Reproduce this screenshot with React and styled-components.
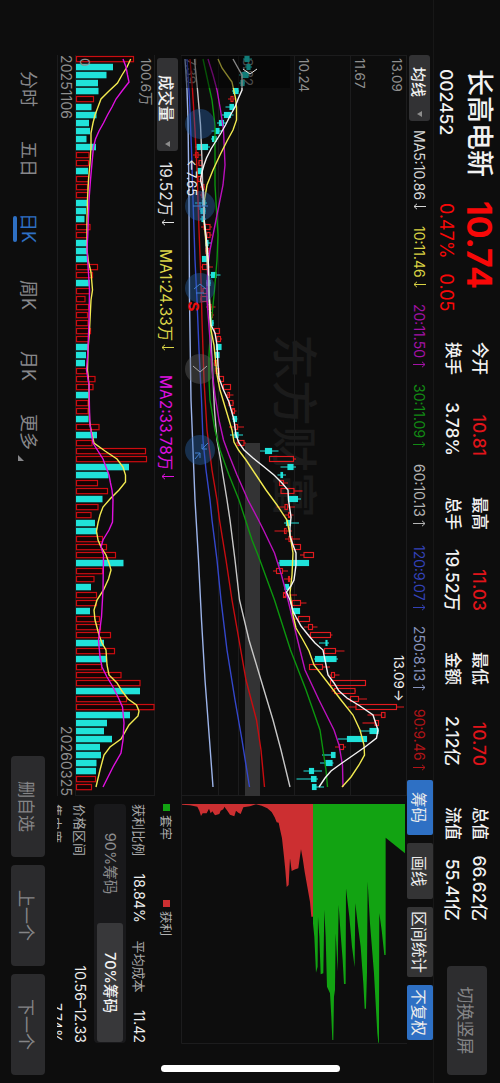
import React from 'react'
import styled, { createGlobalStyle } from 'styled-components'

const RED = '#e01a1e'
const CYAN = '#20e2da'
const YELLOW = '#f2ea50'
const MAGENTA = '#e010e0'

const stats = [
  { a: '今开', av: '10.81', b: '换手', bv: '3.78%', up: true },
  { a: '最高', av: '11.03', b: '总手', bv: '19.52万', up: true },
  { a: '最低', av: '10.70', b: '金额', bv: '2.12亿', up: true },
  { a: '总值', av: '66.62亿', b: '流值', bv: '55.41亿' },
]

const averages = [
  { text: 'MA5:10.86', color: '#d6d6d6', width: 96 },
  { text: '10:11.46', color: '#d9d243', width: 78 },
  { text: '20:11.50', up: true, color: '#a312a6', width: 80 },
  { text: '30:11.09', up: true, color: '#128a14', width: 80 },
  { text: '60:10.13', up: true, color: '#b4b4b4', width: 81 },
  { text: '120:9.07', up: true, color: '#3342b8', width: 81 },
  { text: '250:8.13', up: true, color: '#8794bd', width: 83 },
  { text: '90:9.46', up: true, color: '#b01418', width: 71 },
]

const tools = [
  { name: '筹码', width: 55, on: true },
  { name: '画线', width: 56 },
  { name: '区间统计', width: 70 },
  { name: '不复权', width: 55, on: true },
]

const tabs = [
  { name: '分时', width: 70 },
  { name: '五日', width: 72 },
  { name: '日K', width: 67, on: true },
  { name: '周K', width: 71 },
  { name: '月K', width: 63 },
  { name: '更多', width: 50, more: true },
]

// u = up day (hollow red), d = down day (solid cyan)
const volumes = `u58 d37 d30.5 d22 d22.5 u18 d15.5 d20.5 d13 d14 d10.5 d20 u13.5 u13 d12 u13 u12 u12 d12 d10
d8.5 u14.5 u12 d11.5 d11 d11 u22 u17 d14 u14 u9.5 u13 u12 u12.5 u15 u13 d12 d10 d9 u11.5
u19.5 u17.5 d12.5 u12.5 u12.5 d12.5 u23.5 d21 u16.5 u70 u71 d53 d32.5 u22 u32 d26.5 u22.5 u15.5 d19 d21
u27 u31 u40 d47.5 u27 u18.5 d15 u21 u21 d14 u24 u25 u35 d28 u39 d30 u26 u45.5 u64.5 d64
u51 u78.5 d54 d31 d28 d36 d24 d25 d20.5 d20 u20 u16`.split(/\s+/)

// direction, body bottom, body top, low, high
const candles = [
  ['d', 245, 249, 243, 252], ['d', 247, 250, 245, 252], ['d', 242, 248, 239, 249], ['d', 241, 244, 239, 245],
  ['d', 233.5, 238, 232, 239], ['u', 231, 233, 228, 236], ['d', 230, 233.5, 225.5, 236.5], ['d', 224.5, 230.5, 221.5, 233.5],
  ['d', 219.5, 223.5, 217, 227], ['d', 215.5, 219, 211.5, 222], ['d', 212.5, 216, 211, 217.5], ['d', 197, 207.5, 195, 210],
  ['u', 195.5, 198, 193, 202], ['u', 199, 202, 198, 203], ['d', 198, 201.5, 196.5, 203], ['u', 198, 202, 197, 203],
  ['u', 202, 204, 200, 205], ['u', 202, 204, 200, 205], ['d', 202.5, 205, 195, 207], ['d', 201, 205, 200, 206],
  ['d', 202, 204, 200, 206], ['u', 204, 210, 201, 212], ['u', 207, 210, 205, 212], ['d', 206, 208, 205, 211],
  ['u', 206, 209, 205, 210], ['d', 202.5, 207.5, 202, 209], ['u', 202.5, 207.5, 200, 213], ['d', 211.5, 216, 210, 220.5],
  ['d', 207, 210, 206, 211], ['u', 203, 207, 201, 208], ['u', 201, 207, 200, 208], ['u', 208, 211, 206, 215.5],
  ['u', 211, 212.5, 210, 214], ['d', 211, 213, 210, 214], ['u', 214.5, 219.5, 214, 219.5], ['u', 217, 220.5, 216, 222],
  ['d', 216.5, 221, 216, 221], ['d', 215.5, 219, 215, 219], ['u', 214.5, 217, 214, 218], ['u', 216, 219, 215, 219],
  ['u', 219, 223.5, 218, 224], ['u', 223.5, 230.5, 223, 231], ['u', 228, 229.5, 225.5, 233.5], ['u', 229, 233, 228, 234],
  ['u', 232.5, 234.5, 231, 236.5], ['d', 233.5, 236.5, 232, 237.5], ['u', 235, 237.5, 229, 244], ['d', 235, 238, 230, 243],
  ['u', 238, 244, 236, 246], ['d', 265.5, 271.5, 260, 278.5], ['u', 269.5, 293.5, 269.5, 296], ['d', 288, 293, 280.5, 296],
  ['d', 281, 282.5, 277.5, 286], ['u', 279.5, 283.5, 279, 288], ['u', 281, 294, 281, 302.5], ['d', 289.5, 297.5, 288, 301],
  ['u', 285, 287.5, 276.5, 295], ['u', 288.5, 290.5, 284.5, 293.5], ['d', 286.5, 290.5, 284, 299], ['u', 284.5, 286, 274.5, 292],
  ['u', 289, 292, 285, 300], ['u', 292.5, 300.5, 292, 301], ['u', 304, 313.5, 300, 313.5], ['d', 280, 308.5, 277.5, 309],
  ['u', 276.5, 282.5, 273, 288], ['u', 288.5, 289.5, 284, 291], ['d', 285, 288.5, 284, 290], ['u', 283.5, 285.5, 283, 297],
  ['u', 292.5, 300.5, 290, 306.5], ['d', 292.5, 299.5, 292, 300], ['u', 298.5, 309.5, 293, 310], ['u', 308.5, 312.5, 304, 317.5],
  ['u', 310.5, 330.5, 308, 332.5], ['d', 326, 327, 319, 329], ['u', 324.5, 335.5, 324, 344.5], ['d', 315.5, 336, 314, 338],
  ['u', 309.5, 322.5, 309.5, 330], ['u', 331.5, 334.5, 329.5, 339.5], ['u', 330.5, 365.5, 330, 366], ['u', 334.5, 355, 331.5, 356],
  ['u', 350.5, 358.5, 346.5, 367], ['u', 356, 396.5, 348, 404], ['u', 381.5, 385, 367.5, 385], ['u', 375, 378.5, 362.5, 378.5],
  ['d', 370, 378, 359.5, 379], ['d', 347.5, 366.5, 338, 367], ['u', 339.5, 343.5, 335, 346], ['d', 331.5, 335, 322, 335],
  ['d', 326, 332, 320, 333.5], ['d', 309.5, 313.5, 303.5, 322], ['d', 311.5, 316, 296.5, 318], ['d', 312.5, 316, 312, 324],
]

const priceLines = [
  { color: '#9db4ea', points: '59,185 90,187 120,188 200,189 300,189.5 400,191 450,193 500,195 560,198.5 620,201.5 680,205 740,209.5 787,213' },
  { color: '#3447cc', points: '59,187 100,189.5 150,191.5 200,193 260,195 300,197 350,199 400,201.5 440,203 470,206 500,210 520,212 560,217 600,221 650,227 700,235 740,242 787,249.5' },
  { color: '#c80c10', points: '59,190 90,192.5 130,195 170,197 230,199 280,201 320,202 380,204 430,207 470,212 500,217 520,219.5 560,226 600,232 640,239 680,246 720,256.5 750,261 787,264.5' },
  { color: '#c8c8c8', points: '59,194.5 90,197.5 125,200.5 160,202 200,203 260,207 300,209 340,211 380,213 410,214.5 440,217 460,220.5 500,227 520,230 560,235 600,239.5 640,249 680,261 720,273 750,281 787,290' },
  { color: '#0c960e', points: '59,203 75,206.5 100,212 125,215 160,215 185,215 210,216.5 235,218 260,217 290,214.5 310,212.5 330,210.5 355,209 380,209 400,210 430,215 450,220 475,229 500,239 540,252 555,258 600,274.5 650,290.5 690,306 730,320 750,323 770,326 787,327.5' },
  { color: '#bb10bd', points: '59,208 75,213 90,217 110,220.5 130,223.5 165,225 185,223 205,219 220,216 235,213 250,210 265,208 285,207 300,207 320,208.5 340,210 370,212 395,215 420,219 440,223.5 455,229 475,237 500,248 520,258.5 530,263.5 553,274.5 575,281.5 600,288 625,294 650,300 670,305 700,319 730,334 745,339 765,342.5 787,343' },
  { color: YELLOW, points: '59,218 68,222 82,232 98,235.5 107,236.5 120,236.5 130,233 141,227 155,220 170,213 185,207 200,204.5 220,204 240,206 260,208 290,209 310,210 330,211 345,214 375,217 390,220 410,226 430,232 442,234 450,238.5 460,246 475,256 490,266 505,277 520,287 535,290 553,293 575,292 593,290 615,293 628,296 640,303 651,309 665,314 683,328 700,341 715,353 730,360 745,364 755,364.5 765,359 777,351 787,342' },
  { color: '#f4f4f4', points: '59,233 68,238 75,242 90,242 98,238.5 107,235 115,230.5 125,225.5 133,221 141,216 149,211 158,206.5 165,204 172,202 180,200.5 190,203 203,204 220,204 235,206 250,207.5 265,208.5 290,209 310,210 325,211 333,215 345,217 365,218 378,219 390,223.5 402,229 420,234 435,236 443,239 450,244 458,253 466,263 475,274 483,282 490,288 500,288.5 510,290 517,291 528,290 536,290 545,293 553,296 565,296 580,294 586,291 592,286.5 600,290 611,293 617,296 626,301 636,309 643,315 650,323 665,326 675,328 683,334 691,339 698,347 706,360 715,373 730,378 738,376.5 747,365 763,342 771,331 778,325 787,319' },
]

const volumeLines = [
  { color: YELLOW, points: '59,130.7 67,127 75,122 83,117.5 91,109 99,101 107,98 115,95 123,93 133,91 147,91 163,90 180,88.5 200,87.5 220,87 250,87 262,88.5 272,91 290,92.5 300,91 330,89.5 350,88 370,87.5 385,89 400,89 420,89.5 430,91 443,94 451,105 459,117 467,123 475,125.5 482,125.5 490,119 499,110 507,103 515,100 523,98 531,96.5 540,98 547,101 555,106 563,109 570,111 579,108.5 590,103.5 600,97 610,94 620,95 635,99 643,102 650,106 665,107 675,109 683,117 691,122 699,128 705,136.5 711,139 716,138 725,129 739,121 747,110 755,104 770,100 787,96' },
  { color: MAGENTA, points: '59,123 67,126 75,127.5 82,129 91,122 99,116 107,112 115,107.5 123,103.5 131,99 139,95.5 147,93.5 163,92 180,90.5 200,89 230,88 250,87 265,88 290,89.5 320,89 350,88 370,86.5 385,89 410,89.5 425,90 443,93 451,98 459,103 467,106 475,109 483,110.5 490,112 500,113 522,112.5 530,109 540,103 547,101 555,103.5 590,103 617,101.5 640,98.5 657,100 667,102 677,107 687,113 697,118 707,122.5 723,124 740,123 753,121 767,113 777,108 787,103' },
]

// chip distribution: price level (from the bottom edge), amount; three units to a pixel
const chipsWon = '36,42 36,44 60,46 82,50 88,62 93,78 98,70 110,70 117,56 122,70 127,64 135,76 148,72 152,62 160,58 163,50 172,62 180,74 193,79 198,62 205,68 212,72 220,52 240,49 258,43 275,47 292,55 305,66 314,82 320,97 326,98 330,118 336,145 342,200 346,240 350,291 356,285 360,205 365,243 376,238 385,235 393,178 398,205 404,245 412,290 420,335 424,380 429,380 429,42'
const chipsHeld = '429,42 429,400 433,440 438,548 443,530 444,380 448,440 452,553 460,550 463,360 467,440 471,590 480,610 484,680 487,750 490,750 492,620 495,600 497,430 503,545 506,345 511,420 518,510 522,582 527,582 528,295 538,380 546,470 554,532 556,340 563,400 572,470 580,580 584,656 588,656 591,550 593,275 600,400 612,550 622,730 625,758 627,758 628,370 635,420 643,495 647,495 647,143 705,190 705,42'

function Arrow({ up }) {
  return (
    <ArrowIcon viewBox="0 0 7 13" $up={up}>
      <path d="M3.500 0V12M0.800 9L3.500 12L6.200 9" />
    </ArrowIcon>
  )
}

function PriceChart() {
  return (
    <svg width="741" height="228" viewBox="0 0 741 228">
      <g fill="#1c1c1d">
        <rect x="0" y="0" width="741" height="1" />
        <rect x="0" y="56" width="741" height="1" />
        <rect x="0" y="112" width="741" height="1" />
        <rect x="0" y="168" width="741" height="1" />
        <rect x="0" y="188" width="741" height="1" />
        <rect x="0" y="225" width="741" height="1" />
        <rect x="0" y="0" width="1" height="226" />
        <rect x="740" y="0" width="1" height="226" />
      </g>
      <text x="279" y="129" fontSize="46" fontWeight="500" fill="#1b1b1b">东方财富</text>
      <rect x="388" y="147" width="353" height="15" fill="#333334" />
      <Scale>
        <text x="3" y="15">13.09</text>
        <text x="3" y="52.5">11.67</text>
        <text x="3" y="108.5">10.24</text>
        <text x="3" y="164.5">8.82</text>
        <text x="3" y="221.5">7.39</text>
      </Scale>
      <g transform="translate(-55 407) scale(1 -1)" fill="none">
        {candles.map(([dir, bottom, top, low, high], i) => {
          const x = 59 + i * 8
          const color = dir === 'u' ? RED : CYAN
          return (
            <g key={i} stroke={color} strokeWidth="1.15">
              <path d={`M${x} ${low}V${bottom}M${x} ${top}V${high}`} />
              <rect
                x={x - 2.5} y={bottom} width="5" height={top - bottom}
                fill={dir === 'u' ? 'none' : color}
              />
            </g>
          )
        })}
        {priceLines.map(line => (
          <polyline key={line.color} points={line.points} stroke={line.color} strokeWidth="1.4" />
        ))}
      </g>
      <rect x="1" y="117" width="32" height="109" fill="#000" opacity="0.45" />
      <path d="M14 150L19 157L14 164" fill="none" stroke="#e8e8e8" strokeWidth="1" />
      <g fill="#2a66b0" fillOpacity="0.4">
        <circle cx="69" cy="207" r="15" />
        <circle cx="151" cy="207" r="15" />
        <circle cx="233" cy="207" r="15" />
        <circle cx="314" cy="207" r="15" fill="#666" />
        <circle cx="395" cy="207" r="15" />
      </g>
      <g fill="none" stroke="#3f7fcf" strokeWidth="1">
        <path d="M151 199V214M147 207H155" />
        <path d="M234 201L229 207L234 213M238 203V211" />
        <path d="M311 200L317 207L311 214" stroke="#aaa" />
        <path d="M388 199L394 205M394 200V205H389M404 212L398 207M398 212V207H403" />
      </g>
      <text x="104" y="220" fontSize="13" fill="#eee">←7.65</text>
      <text x="600" y="13.500" fontSize="13.500" fill="#eee">13.09→</text>
      <text x="246.500" y="219.500" fontSize="15" fontWeight="700" fill="#ee1010">S</text>
    </svg>
  )
}

function VolumeChart() {
  return (
    <svg width="741" height="80" viewBox="0 0 741 80">
      <g fill="#1c1c1d">
        <rect x="0" y="0" width="741" height="1" />
        <rect x="0" y="79" width="741" height="1" />
        <rect x="740" y="0" width="1" height="80" />
      </g>
      <Scale>
        <text x="3" y="14">100.6万</text>
      </Scale>
      {volumes.map((v, i) => {
        const h = Number(v.slice(1))
        const x = 1 + i * 8
        return v[0] === 'u'
          ? <rect key={i} x={x + 0.5} y={79.5 - h} width="5.2" height={h - 1} fill="#160303" stroke="#cc0c10" strokeWidth="1.2" />
          : <rect key={i} x={x - 0.2} y={79 - h} width="6.5" height={h} fill={CYAN} />
      })}
      <g transform="translate(-55 155) scale(1 -1)" fill="none" strokeWidth="1.4">
        {volumeLines.map(line => (
          <polyline key={line.color} points={line.points} stroke={line.color} />
        ))}
      </g>
      <Scale>
        <text x="3" y="75">0</text>
      </Scale>
    </svg>
  )
}

function ChipChart() {
  return (
    <svg width="248" height="228" viewBox="0 0 248 228">
      <path d="M0 225.500H247.500V0" fill="none" stroke="#1c1c1d" />
      {/* axes swapped: price runs upwards, amount to the right */}
      <g transform="matrix(0 -0.3333 0.3333 0 -6 237)">
        <polygon points={chipsWon} fill="#cc2f31" />
        <polygon points={chipsHeld} fill="#12a312" />
      </g>
    </svg>
  )
}

export default function App() {
  return (
    <>
      <GlobalStyle />
      <Phone>
        <Screen>
          <Header>
            <NameBox>
              <StockName>长高电新</StockName>
              <StockCode>002452</StockCode>
            </NameBox>
            <PriceBox>
              <Price>10.74</Price>
              <Change><span>0.47%</span><span>0.05</span></Change>
            </PriceBox>
            <Stats>
              {stats.map(s => (
                <Stat key={s.a}>
                  <StatRow $up={s.up}><b>{s.a}</b><span>{s.av}</span></StatRow>
                  <StatRow><b>{s.b}</b><span>{s.bv}</span></StatRow>
                </Stat>
              ))}
            </Stats>
            <Rotate>切换竖屏</Rotate>
          </Header>
          <Averages>
            <Picker $width={66} $size={15}>均线<Caret /></Picker>
            <AverageList>
              {averages.map(a => (
                <Average key={a.text} $color={a.color} $width={a.width}>{a.text}<Arrow up={a.up} /></Average>
              ))}
            </AverageList>
            <Tools>
              {tools.map(t => <Tool key={t.name} $on={t.on} $width={t.width}>{t.name}</Tool>)}
            </Tools>
          </Averages>
          <Body>
            <Charts>
              <PriceChart />
              <VolumeBar>
                <Picker $width={93} $size={15.500}>成交量<Caret /></Picker>
                <VolumeText $color="#e4e4e4" $width={87}>19.52万<Arrow /></VolumeText>
                <VolumeText $color="#dcd648" $width={126}>MA1:24.33万<Arrow /></VolumeText>
                <VolumeText $color={MAGENTA} $width={110}>MA2:33.78万<Arrow /></VolumeText>
              </VolumeBar>
              <VolumeChart />
              <Dates><span>20251106</span><span>20260325</span></Dates>
            </Charts>
            <Side>
              <ChipChart />
              <SideInfo>
                <Legend>
                  <LegendItem $color="#12a312">套牢</LegendItem>
                  <LegendItem $color="#cc2f31">获利</LegendItem>
                </Legend>
                <InfoRow>
                  <span>获利比例</span><b>18.84%</b><span>平均成本</span><b>11.42</b>
                </InfoRow>
                <Segment>
                  <Option>90%筹码</Option>
                  <Option $on>70%筹码</Option>
                </Segment>
                <InfoRow><span>价格区间</span><b>10.56–12.33</b></InfoRow>
                <InfoRow $last><span>集中度</span><b>7.74%</b></InfoRow>
              </SideInfo>
            </Side>
          </Body>
          <Footer>
            <Tabs>
              {tabs.map(t => (
                <Tab key={t.name} $on={t.on} $more={t.more} $width={t.width}><span>{t.name}</span></Tab>
              ))}
            </Tabs>
            <Actions>
              <Action>删自选</Action>
              <Action>上一个</Action>
              <Action>下一个</Action>
            </Actions>
          </Footer>
          <HomeBar />
        </Screen>
      </Phone>
    </>
  )
}

const GlobalStyle = createGlobalStyle`
  body {
    margin: 0;
    padding: 0;
    background: #0d0d0d;
    font-family: Inter, 'Noto Sans CJK SC', sans-serif;
  }
  * {
    box-sizing: border-box;
  }
  svg {
    display: block;
  }
`

const Phone = styled.div`
  width: 500px;
  height: 1083px;
  overflow: hidden;
`

/* landscape page on a portrait phone */
const Screen = styled.main`
  position: relative;
  display: flex;
  flex-direction: column;
  width: 1083px;
  height: 500px;
  transform: rotate(90deg) translateY(-100%);
  transform-origin: 0 0;
  background: #0d0d0d;
  color: #f2f2f2;
  white-space: nowrap;
`

const Header = styled.header`
  display: flex;
  height: 67px;
  padding: 6px 8px 0 69px;
  border-bottom: 1px solid #171717;
`

const NameBox = styled.div`
  width: 132px;
`

const StockName = styled.h1`
  margin: 0;
  font-size: 27px;
  line-height: 30px;
  font-weight: 500;
`

const StockCode = styled.div`
  margin-top: 7px;
  font-size: 17.500px;
  line-height: 22px;
  font-weight: 500;
`

const PriceBox = styled.div`
  width: 141px;
  color: #f80808;
`

const Price = styled.div`
  font-size: 34px;
  line-height: 30px;
  font-weight: 700;
`

const Change = styled.div`
  display: flex;
  gap: 15px;
  margin-top: 7px;
  padding-left: 2px;
  font-size: 18px;
  line-height: 22px;
`

const Stats = styled.div`
  display: flex;
  gap: 41px;
  padding-top: 1px;
`

const Stat = styled.div`
  width: 114px;
`

const StatRow = styled.div`
  display: flex;
  justify-content: space-between;
  height: 27px;
  font-size: 16.500px;
  line-height: 27px;
  font-weight: 500;
  > b {
    font-weight: 500;
  }
  > span {
    font-size: 17.500px;
    color: ${props => props.$up ? '#e0141a' : '#f2f2f2'};
  }
`

const Rotate = styled.button`
  width: 109px;
  height: 40px;
  margin: 7px 0 0 auto;
  padding: 0;
  border: 0;
  border-radius: 4px;
  background: #2d2d2f;
  color: #858587;
  font: inherit;
  font-size: 17px;
`

const Averages = styled.div`
  display: flex;
  align-items: center;
  height: 26px;
  padding-left: 55px;
`

const Picker = styled.div`
  display: flex;
  align-items: center;
  justify-content: space-between;
  width: ${props => props.$width}px;
  height: 21px;
  padding: 0 4px 0 ${props => props.$width > 80 ? 17 : 12}px;
  border-radius: 3px;
  background: #323234;
  font-size: ${props => props.$size}px;
  font-weight: 500;
`

const Caret = styled.span`
  border: 3px solid transparent;
  border-top: 5px solid #8d8d8d;
  border-bottom: 0;
`

const ArrowIcon = styled.svg`
  width: 7px;
  height: 13px;
  margin-left: 3px;
  fill: none;
  stroke: currentColor;
  transform: ${props => props.$up ? 'scaleY(-1)' : 'none'};
`

const AverageList = styled.div`
  display: flex;
  width: 659px;
  padding-left: 9px;
`

const Average = styled.div`
  display: flex;
  align-items: center;
  width: ${props => props.$width}px;
  color: ${props => props.$color};
  font-size: 14px;
`

const Tools = styled.div`
  display: flex;
  gap: 8px;
`

const Tool = styled.button`
  width: ${props => props.$width}px;
  height: 26px;
  padding: 0;
  border: 0;
  border-radius: 2px;
  background: ${props => props.$on ? '#2e70c4' : '#343435'};
  color: #ececec;
  font: inherit;
  font-size: 15.500px;
`

const Body = styled.div`
  display: flex;
  height: 350px;
  padding-left: 55px;
`

const Charts = styled.div`
  width: 741px;
`

const VolumeBar = styled.div`
  display: flex;
  align-items: flex-start;
  height: 24px;
  padding: 1px 0 0 3px;
`

const VolumeText = styled.div`
  display: flex;
  align-items: center;
  width: ${props => props.$width}px;
  height: 21px;
  margin-left: ${props => props.$width === 87 ? 11 : 0}px;
  color: ${props => props.$color};
  font-size: 15.500px;
`

const Dates = styled.div`
  display: flex;
  justify-content: space-between;
  height: 18px;
  border-bottom: 1px solid #1c1c1d;
  color: #8f8f8f;
  font-size: 14px;
  letter-spacing: 0.1px;
  line-height: 18px;
`

const Scale = styled.g`
  fill: #8f8f8f;
  font-size: 13.500px;
`

const Side = styled.div`
  width: 248px;
  height: 350px;
  overflow: hidden;
`

const SideInfo = styled.div`
  padding: 0 1px 0 8px;
`

const Legend = styled.div`
  display: flex;
  height: 26px;
  padding-top: 2px;
  font-size: 12.500px;
  color: #b0b0b0;
`

const LegendItem = styled.div`
  display: flex;
  align-items: center;
  gap: 4px;
  width: 96px;
  height: 20px;
  &:before {
    content: '';
    width: 7px;
    height: 7px;
    background: ${props => props.$color};
  }
`

const InfoRow = styled.div`
  display: flex;
  justify-content: space-between;
  height: ${props => props.$last ? 22 : 27}px;
  font-size: 13px;
  line-height: ${props => props.$last ? 22 : 28}px;
  color: #a8a8a8;
  > b {
    color: #eee;
    font-size: 14px;
    font-weight: 400;
  }
`

const Segment = styled.div`
  display: flex;
  height: 32px;
  padding: 3px 1px 3px 0;
  border-radius: 4px;
  background: #19191b;
`

const Option = styled.div`
  flex: 1;
  border-radius: 3px;
  background: ${props => props.$on ? '#38383a' : 'none'};
  color: ${props => props.$on ? '#f2f2f2' : '#8c8c8e'};
  font-size: 14.500px;
  font-weight: ${props => props.$on ? 500 : 400};
  line-height: 26px;
  text-align: center;
`

const Footer = styled.footer`
  display: flex;
  justify-content: space-between;
  height: 57px;
  padding: 12px 8px 0 71px;
`

const Tabs = styled.nav`
  display: flex;
  padding-top: 4px;
`

const Tab = styled.div`
  width: ${props => props.$width}px;
  color: ${props => props.$on ? '#2e70c4' : '#87878a'};
  font-size: 18px;
  line-height: 26px;
  > span {
    position: relative;
    display: inline-block;
  }
  > span:after {
    content: '';
    position: absolute;
    ${props => props.$on && `
      left: 3px;
      bottom: -2px;
      width: 26px;
      height: 4px;
      border-radius: 2px;
      background: #2e70c4;
    `}
    ${props => props.$more && `
      right: -11px;
      bottom: 3px;
      border: 3px solid transparent;
      border-right-color: #87878a;
      border-bottom-color: #87878a;
    `}
  }
`

const Actions = styled.div`
  display: flex;
  gap: 8px;
`

const Action = styled.button`
  width: 101px;
  height: 34px;
  padding: 0;
  border: 0;
  border-radius: 4px;
  background: #2b2b2d;
  color: #858587;
  font: inherit;
  font-size: 17px;
`

const HomeBar = styled.div`
  position: absolute;
  top: 160px;
  right: 11px;
  width: 7px;
  height: 179px;
  border-radius: 4px;
  background: #fff;
`
